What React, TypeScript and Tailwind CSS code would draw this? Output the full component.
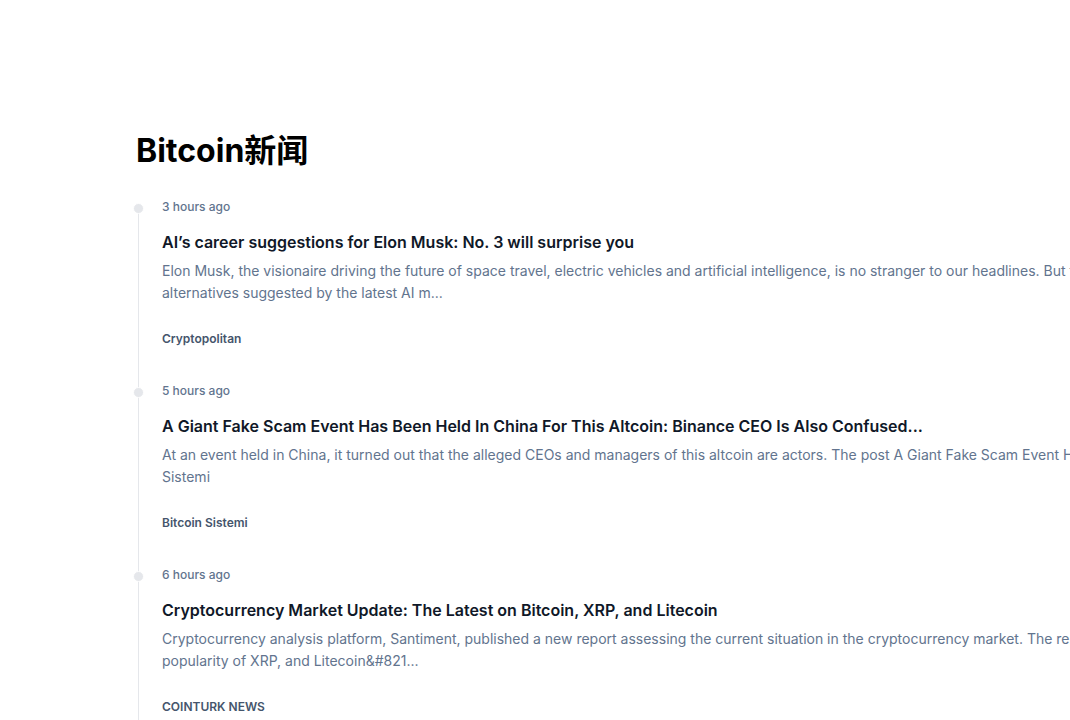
import React from 'react';

type NewsItem = {
  time: string;
  title: string;
  lines: string[];
  source: string;
};

const NEWS: NewsItem[] = [
  {
    time: '3 hours ago',
    title: 'AI’s career suggestions for Elon Musk: No. 3 will surprise you',
    lines: [
      'Elon Musk, the visionaire driving the future of space travel, electric vehicles and artificial intelligence, is no stranger to our headlines. But this time, we look at the career',
      'alternatives suggested by the latest AI m...',
    ],
    source: 'Cryptopolitan',
  },
  {
    time: '5 hours ago',
    title: 'A Giant Fake Scam Event Has Been Held In China For This Altcoin: Binance CEO Is Also Confused...',
    lines: [
      'At an event held in China, it turned out that the alleged CEOs and managers of this altcoin are actors. The post A Giant Fake Scam Event Has Been Held In China For This Altcoin: Binance CEO Is Also Confused first appeared on Bitcoin',
      'Sistemi',
    ],
    source: 'Bitcoin Sistemi',
  },
  {
    time: '6 hours ago',
    title: 'Cryptocurrency Market Update: The Latest on Bitcoin, XRP, and Litecoin',
    lines: [
      'Cryptocurrency analysis platform, Santiment, published a new report assessing the current situation in the cryptocurrency market. The report highlights Bitcoin, the rising',
      'popularity of XRP, and Litecoin&#821...',
    ],
    source: 'COINTURK NEWS',
  },
  {
    time: '8 hours ago',
    title: 'Bitcoin Price Holds Steady as Traders Await Fresh Market Signals',
    lines: [
      'Bitcoin continued to trade in a narrow range on Sunday as market participants weighed macroeconomic data and on-chain activity ahead of the new week.',
      'Analysts expect...',
    ],
    source: 'Cryptopolitan',
  },
];

export default function App() {
  return (
    <div className="min-h-screen w-full overflow-x-hidden bg-white font-['Inter','Noto_Sans_CJK_SC',sans-serif]">
      <div className="pl-[136px] pt-[131px]">
        <h1 className="text-[32px] leading-[40px] font-bold text-black">Bitcoin新闻</h1>

        <ol className="relative ml-[2px] mt-[28px]">
          {/* timeline rail */}
          <div className="absolute left-0 top-[14px] bottom-0 w-px bg-gray-200" />
          {NEWS.map((item, idx) => (
            <li key={idx} className="relative pl-[24px] pb-[36px]">
              <span className="absolute -left-[5px] top-[4px] w-[11px] h-[11px] rounded-full bg-gray-200 border border-white" />
              <div className="text-xs leading-4 font-medium text-slate-500">{item.time}</div>
              <h3 className="mt-[15px] text-base leading-6 font-semibold text-gray-900 whitespace-nowrap">{item.title}</h3>
              <p className="mt-[6px] text-sm leading-[22px] text-slate-500 whitespace-nowrap">
                {item.lines[0]}
                <br />
                {item.lines[1]}
              </p>
              <div className="mt-[27px] text-xs leading-4 font-semibold text-slate-600">{item.source}</div>
            </li>
          ))}
        </ol>
      </div>
    </div>
  );
}
